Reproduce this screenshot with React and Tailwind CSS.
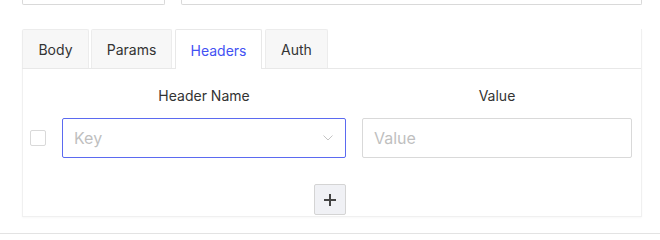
import React, { useState } from 'react';

const tabs = [
  { name: 'Body', cls: 'w-[67px]' },
  { name: 'Params', cls: 'w-[81px] ml-[2px]' },
  { name: 'Headers', cls: 'w-[87px] ml-[3px]' },
  { name: 'Auth', cls: 'w-[63px] ml-[3px]' },
];

export default function App() {
  const [active, setActive] = useState('Headers');

  return (
    <div className="w-[660px] h-[240px] bg-white overflow-hidden font-['Inter',sans-serif] text-[#333]">
      {/* inputs from the row above, mostly scrolled out */}
      <div className="flex gap-4 pl-[22px] pr-[18px]">
        <div className="w-[143px] h-[5px] border-x border-b border-[#d9d9d9] rounded-b-[2px]" />
        <div className="flex-1 h-[5px] border-x border-b border-[#d9d9d9] rounded-b-[2px]" />
      </div>

      <div className="ml-[22px] mt-6 w-[620px] h-[188px] border-r border-b border-[#f0f0f0] shadow-[0_1px_2px_rgba(0,0,0,0.03)]">
        {/* tabs */}
        <div className="flex h-10 border-b border-[#e8e8e8]">
          {tabs.map((t) => (
            <button
              key={t.name}
              onClick={() => setActive(t.name)}
              className={
                t.cls +
                (active === t.name
                  ? ' h-10 pt-[2px] text-sm border border-b-0 border-[#e8e8e8] bg-white text-[#4352f3] rounded-t-[2px] -mb-px'
                  : ' h-[39px] pt-[2px] text-sm border border-b-0 border-[#ececec] bg-[#f7f7f7] text-[#333] rounded-t-[2px]')
              }
            >
              {t.name}
            </button>
          ))}
        </div>

        <div className="border-l border-[#f0f0f0] h-[148px] pl-[7px]">
          <div className="grid grid-cols-[16px_284px_270px] gap-x-4 items-center">
            <div />
            <div className="pt-[17px] h-[49px] text-center text-sm leading-5">Header Name</div>
            <div className="pt-[17px] h-[49px] text-center text-sm leading-5">Value</div>

            <div className="w-4 h-4 border border-[#d9d9d9] rounded-[2px] bg-white" />
            <div className="h-10 border border-[#5b6af0] rounded-[2px] flex items-center justify-between pl-[11px] pr-[12px]">
              <span className="text-[16px] text-[#bfbfbf]">Key</span>
              <svg width="10" height="6" viewBox="0 0 10 6" fill="none">
                <path d="M0.5 0.5L5 5L9.5 0.5" stroke="#c4c4c4" strokeWidth="1" />
              </svg>
            </div>
            <input
              placeholder="Value"
              className="h-10 border border-[#d9d9d9] rounded-[2px] px-[11px] text-[16px] outline-none placeholder:text-[#bfbfbf]"
            />
          </div>

          <div className="flex justify-center pr-[12px] mt-[26px]">
            <button className="w-8 h-[31px] bg-[#f0f1f5] border border-[#d4d4d4] rounded-[2px] flex items-center justify-center">
              <svg width="12" height="12" viewBox="0 0 12 12">
                <path d="M6 0V12M0 6H12" stroke="#444" strokeWidth="2" />
              </svg>
            </button>
          </div>
        </div>
      </div>

      <div className="mt-4 h-px bg-[#e3e3e3]" />
    </div>
  );
}
